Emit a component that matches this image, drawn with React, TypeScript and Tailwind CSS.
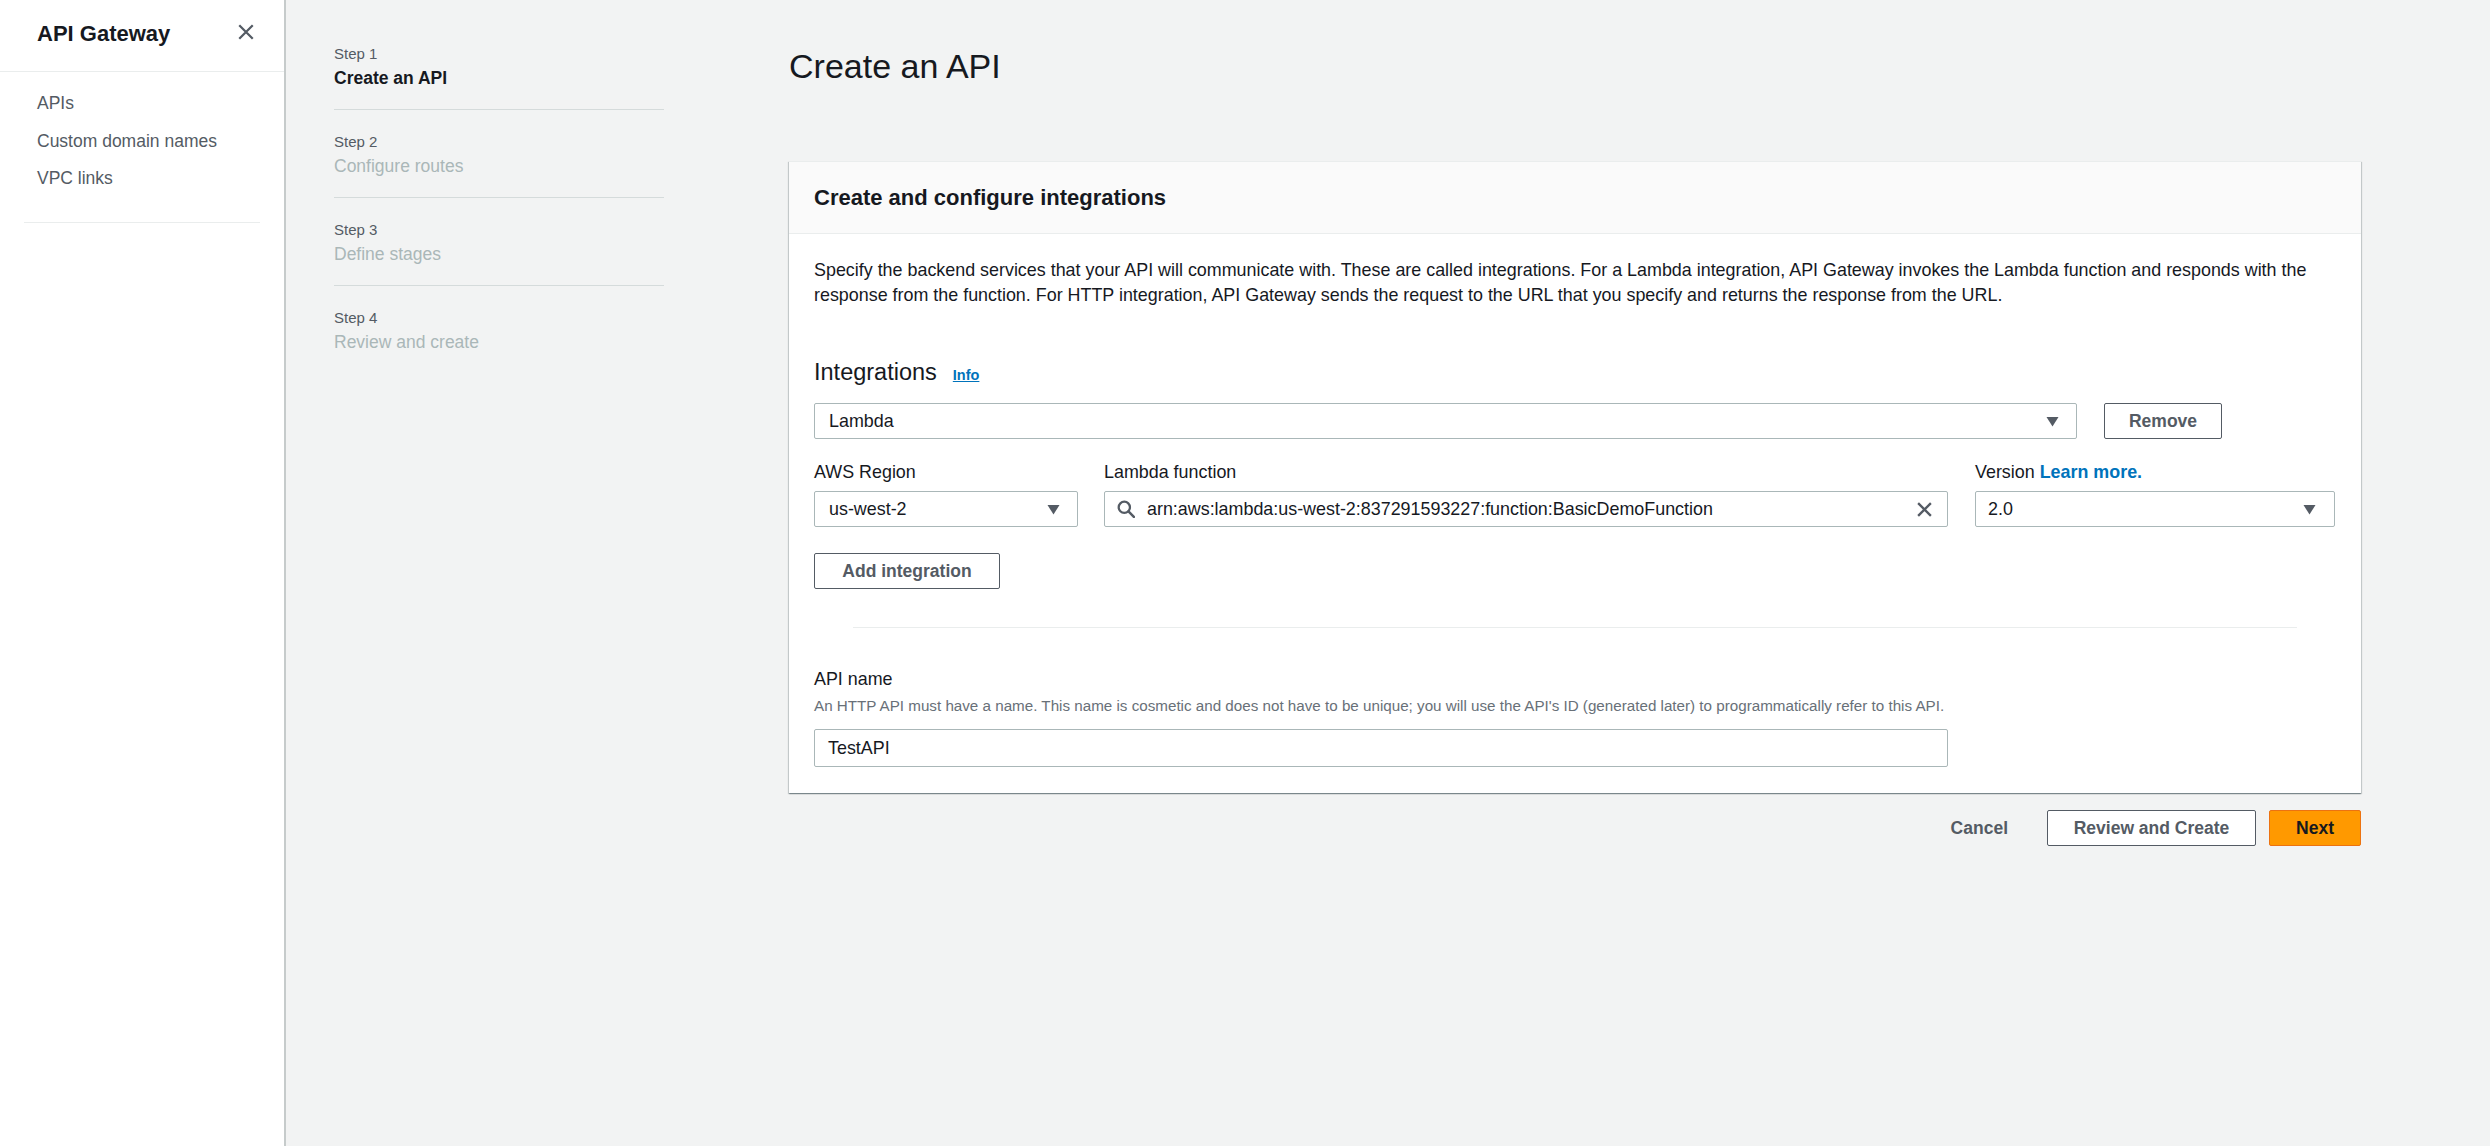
import React from "react";

function Caret() {
  return (
    <svg width="13" height="11" viewBox="0 0 13 11" className="shrink-0">
      <path d="M0.5 1h12L6.5 10.5z" fill="#545b64" />
    </svg>
  );
}

function CloseIcon({ size = 17, stroke = 2 }: { size?: number; stroke?: number }) {
  return (
    <svg width={size} height={size} viewBox="0 0 16 16" className="shrink-0">
      <path d="M2 2l12 12M14 2L2 14" stroke="#545b64" strokeWidth={stroke} strokeLinecap="butt" fill="none" />
    </svg>
  );
}

function SearchIcon() {
  return (
    <svg width="18" height="18" viewBox="0 0 16 16" className="shrink-0">
      <circle cx="6.5" cy="6.5" r="5" stroke="#545b64" strokeWidth="2" fill="none" />
      <path d="M10.2 10.2L15 15" stroke="#545b64" strokeWidth="2.2" strokeLinecap="round" />
    </svg>
  );
}

const steps = [
  { n: 1, title: "Create an API", active: true },
  { n: 2, title: "Configure routes", active: false },
  { n: 3, title: "Define stages", active: false },
  { n: 4, title: "Review and create", active: false },
];

export default function App() {
  return (
    <div className="flex min-h-[1146px] w-[2490px] bg-[#f2f3f3] font-['Liberation_Sans',Arial,sans-serif] text-[#16191f]">
      {/* Sidebar */}
      <aside className="w-[286px] shrink-0 bg-white border-r-2 border-[#c6cbcb]">
        <div className="flex h-[72px] items-start justify-between border-b border-[#eaeded] pl-[37px] pr-[29px] pt-[20px]">
          <span className="text-[22px] font-bold leading-[27px] text-[#16191f]">API Gateway</span>
          <span className="mt-[3px]">
            <CloseIcon size={18} />
          </span>
        </div>
        <nav className="flex flex-col pt-[13px] pl-[37px]">
          {["APIs", "Custom domain names", "VPC links"].map((t) => (
            <a key={t} className="text-[17.5px] leading-[37.5px] text-[#545b64]">
              {t}
            </a>
          ))}
        </nav>
        <div className="mx-[24px] mt-[24px] border-t border-[#eaeded]" />
      </aside>

      {/* Steps */}
      <div className="w-[503px] shrink-0 pl-[48px] pt-[22px]">
        <div className="w-[330px]">
          {steps.map((s, i) => (
            <div
              key={s.n}
              className={
                i < steps.length - 1
                  ? "pt-[22px] pb-[19px] border-b border-[#d5dbdb]"
                  : "pt-[22px] pb-[19px]"
              }
            >
              <div className="text-[15px] leading-[20px] text-[#545b64]">Step {s.n}</div>
              <div
                className={
                  s.active
                    ? "mt-[2px] text-[17.5px] leading-[24px] font-bold text-[#16191f]"
                    : "mt-[2px] text-[17.5px] leading-[24px] text-[#aab7b8]"
                }
              >
                {s.title}
              </div>
            </div>
          ))}
        </div>
      </div>

      {/* Main */}
      <main className="w-[1572px] shrink-0 pt-[45px]">
        <h1 className="text-[34px] leading-[42px] font-normal text-[#16191f]">Create an API</h1>

        <section className="mt-[74px] bg-white border-t border-[#eaeded] shadow-[0_1px_1px_0_rgba(0,28,36,0.3),1px_1px_1px_0_rgba(0,28,36,0.15),-1px_1px_1px_0_rgba(0,28,36,0.15)]">
          <div className="flex h-[72px] items-center bg-[#fafafa] border-b border-[#eaeded] px-[25px]">
            <h2 className="text-[22px] font-bold leading-[28px] text-[#16191f]">Create and configure integrations</h2>
          </div>

          <div className="px-[25px] pt-[24px] pb-[26px]">
            <p className="text-[17.9px] leading-[25px] text-[#16191f]">
              Specify the backend services that your API will communicate with. These are called integrations. For a Lambda integration, API Gateway invokes the Lambda function and responds with the response from the function. For HTTP integration, API Gateway sends the request to the URL that you specify and returns the response from the URL.
            </p>

            <div className="mt-[50px] flex items-center h-[28px]">
              <span className="text-[23.5px] leading-[28px] text-[#16191f]">Integrations</span>
              <a className="ml-[16px] mt-[5px] text-[14.5px] font-bold leading-[20px] text-[#0073bb] underline">Info</a>
            </div>

            <div className="mt-[17px] flex items-center">
              <div className="flex h-[36px] w-[1263px] items-center justify-between rounded-[2px] border border-[#aab7b8] bg-white pl-[14px] pr-[17px]">
                <span className="text-[17.9px] text-[#16191f]">Lambda</span>
                <Caret />
              </div>
              <button className="ml-[27px] h-[36px] w-[118px] rounded-[2px] border border-[#545b64] bg-white text-[17.5px] font-bold text-[#545b64]">
                Remove
              </button>
            </div>

            <div className="mt-[21px] flex">
              <div className="w-[264px]">
                <div className="text-[17.9px] leading-[24px] text-[#16191f]">AWS Region</div>
                <div className="mt-[7px] flex h-[36px] items-center justify-between rounded-[2px] border border-[#aab7b8] bg-white pl-[14px] pr-[17px]">
                  <span className="text-[17.9px] text-[#16191f]">us-west-2</span>
                  <Caret />
                </div>
              </div>
              <div className="ml-[26px] w-[844px]">
                <div className="text-[17.9px] leading-[24px] text-[#16191f]">Lambda function</div>
                <div className="mt-[7px] flex h-[36px] items-center rounded-[2px] border border-[#aab7b8] bg-white pl-[12px] pr-[14px]">
                  <SearchIcon />
                  <span className="ml-[12px] flex-1 text-[17.9px] text-[#16191f]">
                    arn:aws:lambda:us-west-2:837291593227:function:BasicDemoFunction
                  </span>
                  <CloseIcon size={17} stroke={2.2} />
                </div>
              </div>
              <div className="ml-[27px] w-[360px]">
                <div className="text-[17.9px] leading-[24px] text-[#16191f]">
                  Version <a className="font-bold text-[#0073bb]">Learn more.</a>
                </div>
                <div className="mt-[7px] flex h-[36px] items-center justify-between rounded-[2px] border border-[#aab7b8] bg-white pl-[12px] pr-[18px]">
                  <span className="text-[17.9px] text-[#16191f]">2.0</span>
                  <Caret />
                </div>
              </div>
            </div>

            <button className="mt-[26px] h-[36px] w-[186px] rounded-[2px] border border-[#545b64] bg-white text-[17.5px] font-bold text-[#545b64]">
              Add integration
            </button>

            <div className="mx-[39px] mt-[38px] border-t border-[#eaeded]" />

            <div className="mt-[39px] text-[17.9px] leading-[24px] text-[#16191f]">API name</div>
            <div className="mt-[5px] text-[15.2px] leading-[20px] text-[#687078]">
              An HTTP API must have a name. This name is cosmetic and does not have to be unique; you will use the API's ID (generated later) to programmatically refer to this API.
            </div>
            <div className="mt-[13px] flex h-[38px] w-[1134px] items-center rounded-[2px] border border-[#aab7b8] bg-white pl-[13px]">
              <span className="text-[17.9px] text-[#16191f]">TestAPI</span>
            </div>
          </div>
        </section>

        <div className="mt-[17px] flex items-center justify-end">
          <button className="h-[36px] px-[20px] text-[17.5px] font-bold text-[#545b64]">Cancel</button>
          <button className="ml-[19px] h-[36px] w-[209px] rounded-[2px] border border-[#545b64] bg-white text-[17.5px] font-bold text-[#545b64]">
            Review and Create
          </button>
          <button className="ml-[13px] h-[36px] w-[92px] rounded-[2px] border border-[#ec7211] bg-[#ff9900] text-[17.5px] font-bold text-[#16191f]">
            Next
          </button>
        </div>
      </main>
    </div>
  );
}
